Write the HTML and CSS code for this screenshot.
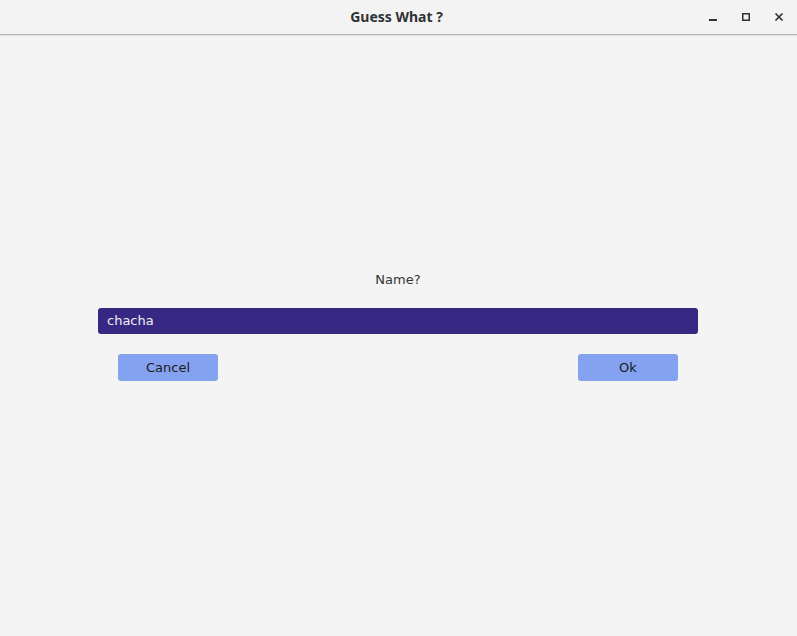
FILE: index.html
```html
<!DOCTYPE html>
<html>
<head>
<meta charset="utf-8">
<link rel="stylesheet" href="styles.css">
</head>
<body>
<div class="window">
  <header class="titlebar">
    <div class="title">Guess What ?</div>
    <div class="controls">
      <span class="ctl"><svg width="10" height="10" viewBox="0 0 10 10"><rect x="1" y="7" width="8" height="2" fill="#2e3436"/></svg></span>
      <span class="ctl"><svg width="10" height="10" viewBox="0 0 10 10"><rect x="1.75" y="1.75" width="6.5" height="6.5" fill="none" stroke="#2e3436" stroke-width="1.5"/></svg></span>
      <span class="ctl"><svg width="10" height="10" viewBox="0 0 10 10"><path d="M1.5 1.5 L8.5 8.5 M8.5 1.5 L1.5 8.5" stroke="#2e3436" stroke-width="1.7"/></svg></span>
    </div>
  </header>
  <main class="content">
    <div class="dialog">
      <div class="label">Name?</div>
      <div class="field">chacha</div>
      <div class="buttons">
        <button class="btn">Cancel</button>
        <button class="btn">Ok</button>
      </div>
    </div>
  </main>
</div>
</body>
</html>
```
FILE: styles.css
```css
html, body {
  margin: 0;
  padding: 0;
  width: 797px;
  height: 636px;
  overflow: hidden;
  background: #f4f4f4;
  font-family: "DejaVu Sans", sans-serif;
}
.window {
  display: flex;
  flex-direction: column;
  height: 636px;
}
.titlebar {
  height: 34px;
  border-bottom: 1px solid #b8b8b6;
  box-shadow: 0 1px 0 #e0e0e0;
  background: #f3f3f3;
  display: flex;
  align-items: center;
  justify-content: center;
  position: relative;
}
.title {
  font-family: "Noto Sans", "DejaVu Sans", sans-serif;
  font-weight: bold;
  font-size: 14px;
  color: #2e3436;
  margin-right: 4px;
  margin-top: -1px;
}
.controls {
  position: absolute;
  right: 2px;
  top: 0;
  height: 34px;
  display: flex;
  align-items: center;
}
.ctl {
  width: 33px;
  height: 34px;
  display: flex;
  align-items: center;
  justify-content: center;
}
.content {
  flex: 1;
  display: flex;
  justify-content: center;
  padding-right: 1px;
}
.dialog {
  width: 600px;
  margin-top: 237px;
  display: flex;
  flex-direction: column;
  align-items: center;
}
.label {
  font-size: 13px;
  color: #333;
  height: 16px;
  line-height: 16px;
}
.field {
  margin-top: 20px;
  width: 600px;
  height: 26px;
  box-sizing: border-box;
  background: #372983;
  border-radius: 3px;
  color: #f0f0f0;
  font-size: 13px;
  line-height: 26px;
  padding-left: 9px;
}
.buttons {
  margin-top: 20px;
  width: 560px;
  display: flex;
  justify-content: space-between;
}
.btn {
  width: 100px;
  height: 27px;
  border: none;
  border-radius: 3px;
  background: #84a2ef;
  color: #1a1a1a;
  font-family: "DejaVu Sans", sans-serif;
  font-size: 13px;
  padding: 0;
}
```
